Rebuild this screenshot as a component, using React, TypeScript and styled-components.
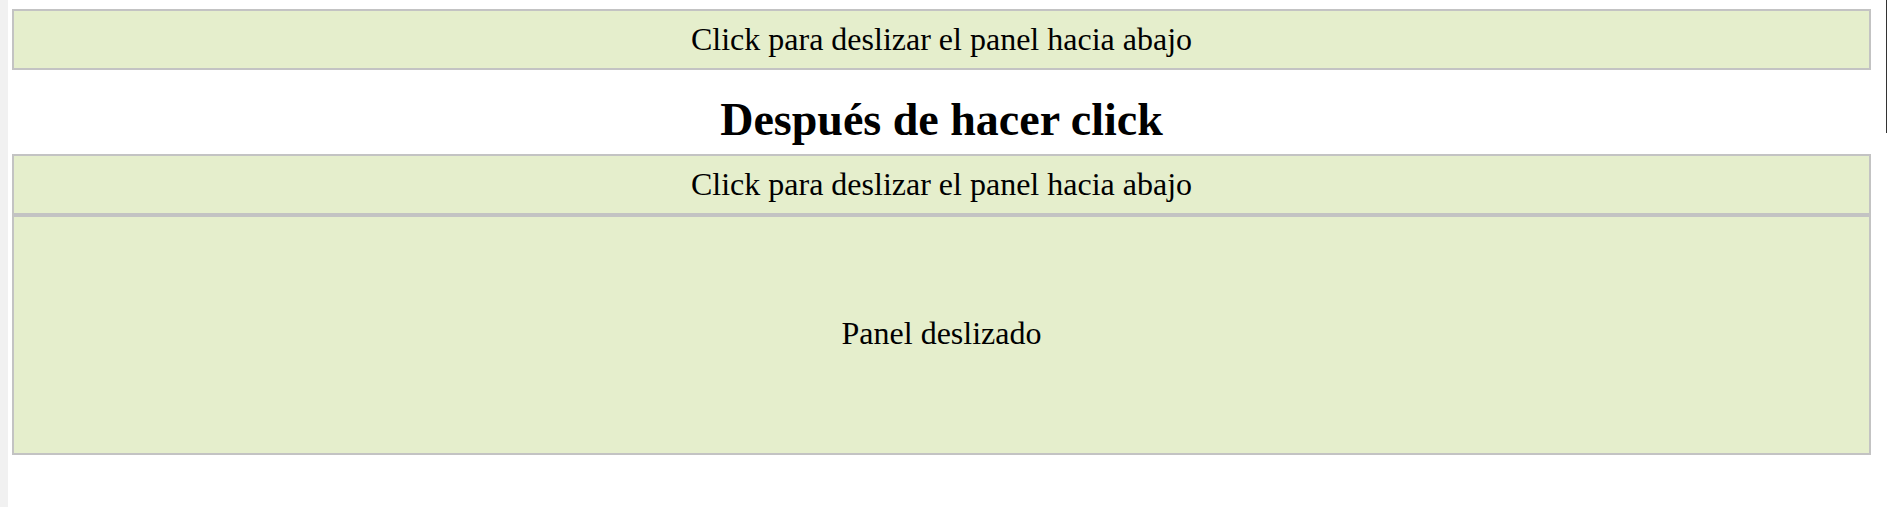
import React from "react"
import styled, { createGlobalStyle } from "styled-components"

const GlobalStyle = createGlobalStyle`
  body {
    margin: 0;
    background: #ffffff;
    font-family: "Liberation Serif", "Times New Roman", serif;
    color: #000000;
  }
`

const Page = styled.div`
  display: flex;
  min-height: 507px;
`

const LeftStrip = styled.div`
  width: 8px;
  flex-shrink: 0;
  background: #f1f1f1;
`

const Main = styled.main`
  flex: 1;
  padding: 9px 0 0 4px;
`

const RightGutter = styled.div`
  width: 25px;
  flex-shrink: 0;
  padding-left: 15px;
  box-sizing: border-box;
`

const ScrollLine = styled.div`
  width: 1px;
  height: 133px;
  background: #333333;
`

const Flip = styled.div`
  padding: 10px;
  text-align: center;
  background: #e5eecc;
  border: 2px solid #c3c3c3;
  font-size: 32px;
  line-height: 37px;
  cursor: pointer;
`

const Panel = styled.div`
  padding: 98px 10px 102px;
  text-align: center;
  background: #e5eecc;
  border: 2px solid #c3c3c3;
  font-size: 32px;
  line-height: 36px;
`

const Heading = styled.h2`
  margin: 24px 0 8px;
  text-align: center;
  font-size: 46px;
  line-height: 52px;
  font-weight: bold;
`

function App() {
  return (
    <>
      <GlobalStyle />
      <Page>
        <LeftStrip />
        <Main>
          <Flip>Click para deslizar el panel hacia abajo</Flip>
          <Heading>Después de hacer click</Heading>
          <Flip>Click para deslizar el panel hacia abajo</Flip>
          <Panel>Panel deslizado</Panel>
        </Main>
        <RightGutter>
          <ScrollLine />
        </RightGutter>
      </Page>
    </>
  )
}

export default App
